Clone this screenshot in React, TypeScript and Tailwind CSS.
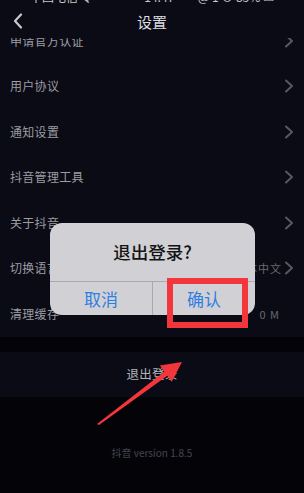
import React from 'react'

const rows: { label: string; right?: string; chevron: boolean }[] = [
  { label: '申请官方认证', chevron: true },
  { label: '用户协议', chevron: true },
  { label: '通知设置', chevron: true },
  { label: '抖音管理工具', chevron: true },
  { label: '关于抖音', chevron: true },
  { label: '切换语言', right: '简体中文', chevron: true },
  { label: '清理缓存', right: '0 M', chevron: false },
]

function Chevron({ className = '' }: { className?: string }) {
  return (
    <svg width="10" height="14" viewBox="0 0 10 14" className={className}>
      <polyline points="2,1.5 8,7 2,12.5" fill="none" stroke="#58585f" strokeWidth="2" strokeLinecap="round" strokeLinejoin="round" />
    </svg>
  )
}

export default function App() {
  return (
    <div
      className="relative h-[493px] w-[304px] overflow-hidden bg-[#040408]"
      style={{ fontFamily: '"Noto Sans CJK SC", "Noto Sans", sans-serif' }}
    >
      {/* status bar, mostly scrolled off */}
      <div className="h-[5px] overflow-hidden bg-[#0b0b15]">
        <div className="-mt-[10px] flex items-center justify-between px-[30px] text-[12px] leading-[14px] text-[#c8c8cc]">
          <span>中国电信 令</span>
          <span className="ml-[28px]">14:47</span>
          <span>@ 1 ⊙ 83% ▭</span>
        </div>
      </div>

      {/* nav */}
      <div className="relative flex h-[33px] items-center justify-center bg-[#0b0b15]">
        <svg width="10" height="16" viewBox="0 0 10 16" className="absolute left-[13px] top-[8px]">
          <polyline points="8,1.5 2,8 8,14.5" fill="none" stroke="#c8c8cc" strokeWidth="2.2" strokeLinecap="round" strokeLinejoin="round" />
        </svg>
        <span className="text-[15px] leading-none text-[#dcdce0]">设置</span>
      </div>

      {/* list */}
      <div className="h-[299px] overflow-hidden bg-[#0b0b15]">
        <div className="-mt-[20px]">
          {rows.map((row) => (
            <div key={row.label} className="flex h-[45.5px] items-center justify-between pl-[10px] pr-[10px]">
              <span className="text-[12px] tracking-[0.3px] text-[#9c9ca2]">{row.label}</span>
              <div className={`flex items-center gap-[2px] ${row.chevron ? '' : 'pr-[14px]'}`}>
                {row.right && <span className="text-[11px] tracking-[1px] text-[#68686e]">{row.right}</span>}
                {row.chevron && <Chevron />}
              </div>
            </div>
          ))}
        </div>
      </div>

      {/* logout band */}
      <div className="mt-[15px] flex h-[45px] items-center justify-center bg-[#0b0b15]">
        <span className="text-[12.5px] tracking-[0.3px] text-[#b4b4ba]">退出登录</span>
      </div>

      <p className="mt-[48px] text-center text-[10px] text-[#45454f]">抖音 version 1.8.5</p>

      {/* alert */}
      <div className="absolute left-[50px] top-[223px] flex h-[92px] w-[205px] flex-col overflow-hidden rounded-[12px] bg-[#d1d1d5]">
        <div className="flex h-[59px] items-center justify-center border-b border-[#a9a9ae]">
          <span className="text-[17.5px] font-medium text-[#141414]">退出登录?</span>
        </div>
        <div className="flex flex-1">
          <div className="flex w-[103px] items-center justify-center border-r border-[#a9a9ae] text-[17px] text-[#2f7ee3]">取消</div>
          <div className="flex flex-1 items-center justify-center text-[17px] text-[#2f7ee3]">确认</div>
        </div>
      </div>

      {/* annotation box */}
      <div className="absolute left-[167px] top-[278px] h-[50px] w-[81px] border-[6px] border-[#f2363b]" />

      {/* annotation arrow */}
      <svg className="absolute left-0 top-0" width="304" height="493" viewBox="0 0 304 493">
        <polygon
          points="97,424 164.3,371.7 159.9,365.6 182,362 171.7,381.8 167.3,375.7 99,425"
          fill="#f2363b"
        />
      </svg>
    </div>
  )
}
